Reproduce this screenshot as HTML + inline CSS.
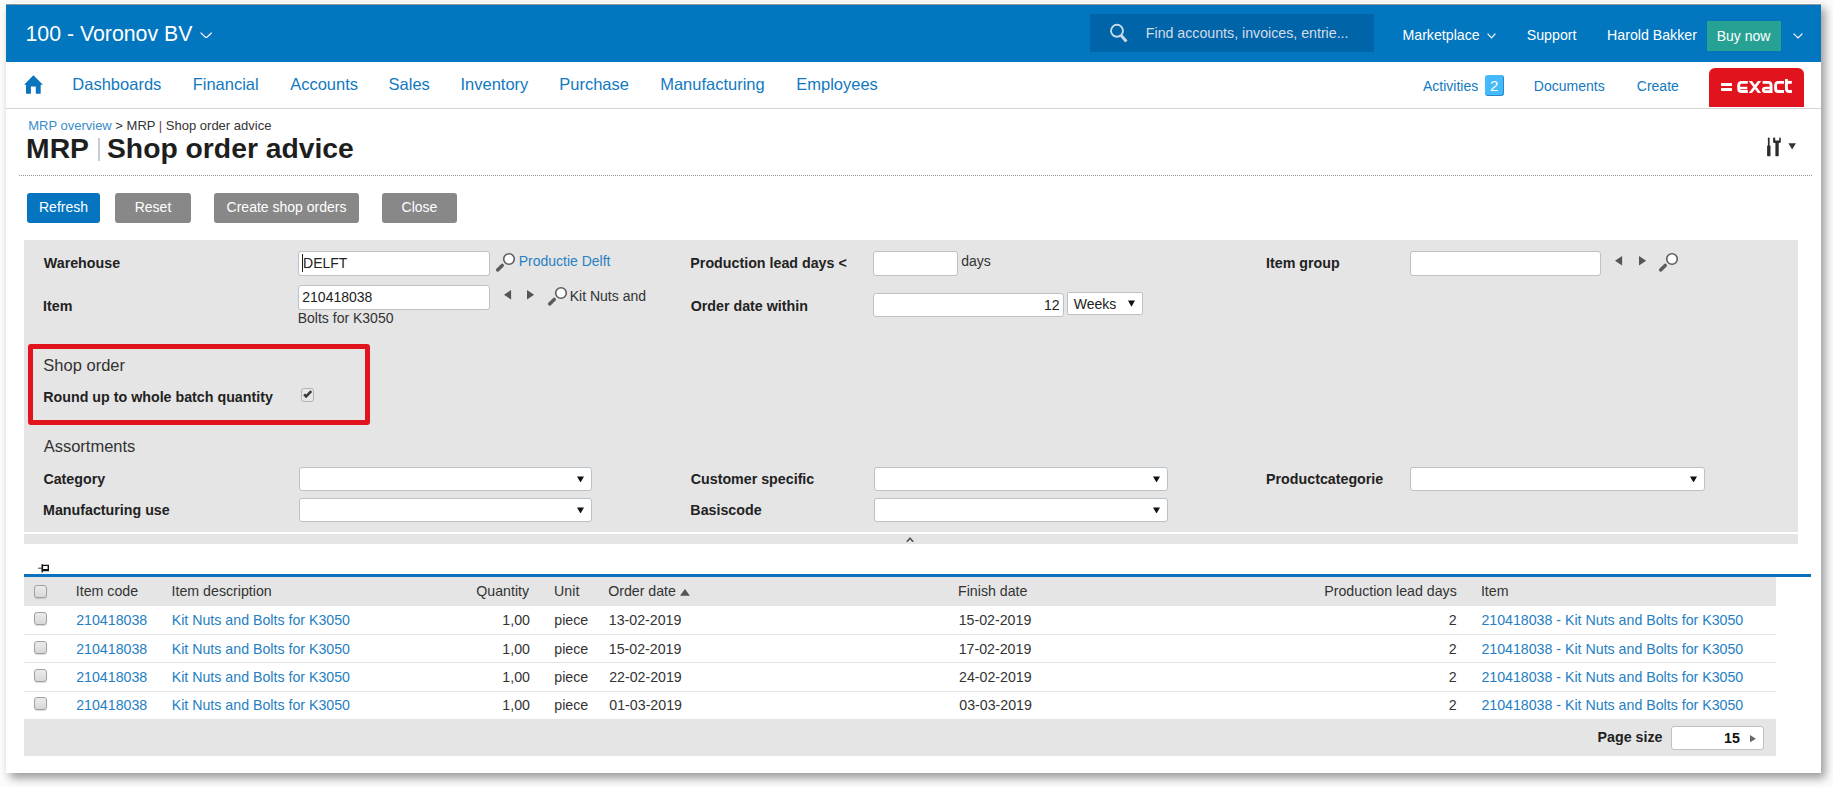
<!DOCTYPE html>
<html><head><meta charset="utf-8"><style>
html,body{margin:0;padding:0;}
body{width:1833px;height:787px;position:relative;overflow:hidden;background:#fcfcfc;font-family:"Liberation Sans",sans-serif;}
.t{position:absolute;white-space:nowrap;line-height:20px;}
.b{position:absolute;}
</style></head><body>
<div class="b" style="left:6px;top:3px;width:1815px;height:770px;background:#fff;box-shadow:4px 5px 9px rgba(0,0,0,0.4);"></div>
<div class="b" style="left:6px;top:4px;width:1815px;height:58px;background:#0276be;border-top:1px solid #8d9298;box-sizing:border-box;"></div>
<div class="t" style="left:25.48px;top:24.32px;font-size:21.3px;color:#fff;">100 - Voronov BV</div>
<svg class="b" style="left:200px;top:31.8px" width="12.3" height="6.6" viewBox="0 0 12.3 6.6"><polyline points="0.6,0.6 6.15,6.0 11.700000000000001,0.6" fill="none" stroke="#fff" stroke-width="1.2"/></svg>
<div class="b" style="left:1090px;top:14px;width:284px;height:38px;background:#0064a8;"></div>
<svg class="b" style="left:1108px;top:23px" width="20" height="21" viewBox="0 0 20 21"><circle cx="9" cy="7.8" r="6" fill="none" stroke="#c8d9ea" stroke-width="1.9"/><line x1="13.2" y1="12.4" x2="18.4" y2="18.4" stroke="#c8d9ea" stroke-width="3"/></svg>
<div class="t" style="left:1145.84px;top:23.28px;font-size:14.2px;color:#d3dde8;">Find accounts, invoices, entrie...</div>
<div class="t" style="left:1402.44px;top:25.38px;font-size:14.2px;color:#fff;">Marketplace</div>
<svg class="b" style="left:1487px;top:33.3px" width="9" height="5.5" viewBox="0 0 9 5.5"><polyline points="0.6,0.6 4.5,4.9 8.4,0.6" fill="none" stroke="#fff" stroke-width="1.2"/></svg>
<div class="t" style="left:1526.76px;top:25.38px;font-size:14.2px;color:#fff;">Support</div>
<div class="t" style="left:1607.04px;top:25.38px;font-size:14.2px;color:#fff;">Harold Bakker</div>
<div class="b" style="left:1707px;top:21px;width:74px;height:30px;background:#26a193;"></div>
<div class="t" style="left:1716.65px;top:25.85px;font-size:14px;color:#fff;">Buy now</div>
<svg class="b" style="left:1793.3px;top:33px" width="10" height="5.5" viewBox="0 0 10 5.5"><polyline points="0.6,0.6 5.0,4.9 9.4,0.6" fill="none" stroke="#fff" stroke-width="1.2"/></svg>
<div class="b" style="left:6px;top:108px;width:1815px;height:1px;background:#d4d4d4;"></div>
<svg class="b" style="left:24px;top:75px" width="19" height="19" viewBox="0 0 19 19"><path d="M9.4 0.2 L18.9 9.7 L16.7 9.7 L16.7 18.7 L11.8 18.7 L11.8 11.4 L6.9 11.4 L6.9 18.7 L2 18.7 L2 9.7 L0.1 9.7 Z" fill="#0b74bd"/></svg>
<div class="t" style="left:72.35px;top:74.18px;font-size:16.5px;color:#1279c1;">Dashboards</div>
<div class="t" style="left:192.65px;top:74.18px;font-size:16.5px;color:#1279c1;">Financial</div>
<div class="t" style="left:290.17px;top:74.18px;font-size:16.5px;color:#1279c1;">Accounts</div>
<div class="t" style="left:388.55px;top:74.18px;font-size:16.5px;color:#1279c1;">Sales</div>
<div class="t" style="left:460.48px;top:74.18px;font-size:16.5px;color:#1279c1;">Inventory</div>
<div class="t" style="left:559.25px;top:74.18px;font-size:16.5px;color:#1279c1;">Purchase</div>
<div class="t" style="left:660.15px;top:74.18px;font-size:16.5px;color:#1279c1;">Manufacturing</div>
<div class="t" style="left:796.25px;top:74.18px;font-size:16.5px;color:#1279c1;">Employees</div>
<div class="t" style="left:1422.97px;top:76.15px;font-size:14px;color:#1279c1;">Activities</div>
<div class="b" style="left:1485px;top:75px;width:19px;height:20.5px;background:#44bafa;border-right:1.2px solid #2a88c8;border-bottom:1.2px solid #2a88c8;box-sizing:border-box;border-radius:3px;"></div>
<div class="t" style="left:1294.10px;width:400px;text-align:center;top:76.10px;font-size:15px;color:#fff;">2</div>
<div class="t" style="left:1533.85px;top:76.15px;font-size:14px;color:#1279c1;">Documents</div>
<div class="t" style="left:1636.79px;top:76.15px;font-size:14px;color:#1279c1;">Create</div>
<div class="b" style="left:1709px;top:68px;width:95px;height:39px;background:#e1141d;border-radius:6px 6px 0 0;"></div>
<svg class="b" style="left:1709px;top:68px" width="95" height="39" viewBox="0 0 95 39">
<rect x="12" y="15.1" width="11" height="2.9" rx="0.6" fill="#fff"/><rect x="12" y="20.0" width="11" height="2.9" rx="0.6" fill="#fff"/>
<g fill="none" stroke="#fff" stroke-width="2.9">
<path d="M38.8 14.35 H32.6 Q29.7 14.35 29.7 17.6 V20.4 Q29.7 23.55 32.6 23.55 H38.8"/>
<path d="M29.7 20.0 H38.3" stroke-width="2.5"/>
<path d="M53.6 14.35 H59.4 Q62.05 14.35 62.05 17.2 V25"/>
<path d="M62.05 19.95 H56.6 Q54.25 19.95 54.25 21.9 Q54.25 23.6 56.2 23.6 H62.05" stroke-width="2.6"/>
<path d="M75 14.35 H69.2 Q66.6 14.35 66.6 17.6 V20.4 Q66.6 23.55 69.2 23.55 H75"/>
<path d="M77.4 11.0 V20.6 Q77.4 23.55 80.2 23.55 H82.9"/>
<path d="M77.4 14.35 H82.8"/>
</g>
<path d="M39.7 12.9 H43 L52.2 25 H48.9 Z M48.9 12.9 H52.2 L43 25 H39.7 Z" fill="#fff"/>
</svg>
<div class="t" style="left:28.2px;top:115.5px;font-size:13px;color:#333"><span style="color:#3a8ccb">MRP overview</span> &gt; MRP <span style="color:#7a3a5a">|</span> Shop order advice</div>
<div class="t" style="left:26.11px;top:138.39px;font-size:28.3px;color:#1e1e1e;font-weight:bold;">MRP</div>
<div class="b" style="left:98px;top:138px;width:2px;height:23px;background:#c8ccd4;"></div>
<div class="t" style="left:106.98px;top:138.39px;font-size:28.3px;color:#1e1e1e;font-weight:bold;">Shop order advice</div>
<svg class="b" style="left:1765px;top:136px" width="32" height="22" viewBox="0 0 32 22">
<rect x="2.9" y="1.4" width="1.7" height="9" rx="0.85" fill="#2b2b2b"/><rect x="2.1" y="9.6" width="3.4" height="10.6" rx="0.6" fill="#2b2b2b"/>
<path d="M8.1 2.4 Q8.1 1.4 9.1 1.4 L9.6 1.4 Q10.2 1.4 10.2 2.2 L10.2 4.5 L14.2 4.5 L14.2 2.2 Q14.2 1.4 14.8 1.4 L15.2 1.4 Q15.8 1.4 15.8 2.4 L15.8 5.8 Q15.8 7 14.2 7 L13.7 7 L13.7 19.6 Q13.7 20.2 13.1 20.2 L11 20.2 Q10.4 20.2 10.4 19.6 L10.4 7 L9.7 7 Q8.1 7 8.1 5.8 Z" fill="#2b2b2b"/>
<path d="M23.4 7.3 L30.9 7.3 L27.15 13.6 Z" fill="#333"/>
</svg>
<div class="b" style="left:19px;top:175px;width:1793px;height:0;border-top:1px dotted #8c9aa5;"></div>
<div class="b" style="left:27px;top:193px;width:73px;height:30px;background:#0575bf;border-radius:3px;"></div><div class="t" style="left:-136.50px;width:400px;text-align:center;top:197.05px;font-size:14px;color:#fff;">Refresh</div>
<div class="b" style="left:115px;top:193px;width:76px;height:30px;background:#888;border-radius:3px;"></div><div class="t" style="left:-47.00px;width:400px;text-align:center;top:197.05px;font-size:14px;color:#fff;">Reset</div>
<div class="b" style="left:214px;top:193px;width:145px;height:30px;background:#888;border-radius:3px;"></div><div class="t" style="left:86.50px;width:400px;text-align:center;top:197.05px;font-size:14px;color:#fff;">Create shop orders</div>
<div class="b" style="left:382px;top:193px;width:75px;height:30px;background:#888;border-radius:3px;"></div><div class="t" style="left:219.50px;width:400px;text-align:center;top:197.05px;font-size:14px;color:#fff;">Close</div>
<div class="b" style="left:24px;top:240px;width:1774px;height:292px;background:#e5e5e5;"></div>
<div class="t" style="left:43.79px;top:253.26px;font-size:14.25px;color:#222;font-weight:bold;">Warehouse</div>
<div class="b" style="left:298px;top:250.5px;width:192px;height:25.0px;background:#fff;border:1px solid #b9c2c9;border-radius:3px;box-sizing:border-box;"></div>
<div class="t" style="left:303.05px;top:253.45px;font-size:14px;color:#222;">DELFT</div>
<div class="b" style="left:302px;top:254px;width:1px;height:18px;background:#222;"></div>
<svg class="b" style="left:494.7px;top:252.3px" width="21" height="21" viewBox="0 0 21 21"><line x1="7.2" y1="13.4" x2="2.6" y2="17.9" stroke="#5c5c5c" stroke-width="3.5" stroke-linecap="round"/><circle cx="14" cy="7" r="5.3" fill="#fff" stroke="#5c5c5c" stroke-width="1.6"/></svg>
<div class="t" style="left:518.65px;top:251.05px;font-size:14px;color:#2a80c3;">Productie Delft</div>
<div class="t" style="left:43.05px;top:295.96px;font-size:14.25px;color:#222;font-weight:bold;">Item</div>
<div class="b" style="left:298px;top:284.5px;width:192px;height:25.0px;background:#fff;border:1px solid #b9c2c9;border-radius:3px;box-sizing:border-box;"></div>
<div class="t" style="left:302.30px;top:287.45px;font-size:14px;color:#222;">210418038</div>
<svg class="b" style="left:503.9px;top:290px" width="8" height="10" viewBox="0 0 8 10"><path d="M7.1 0 L0 4.8 L7.1 9.6 Z" fill="#555"/></svg>
<svg class="b" style="left:527.1px;top:290px" width="8" height="10" viewBox="0 0 8 10"><path d="M0 0 L7.1 4.8 L0 9.6 Z" fill="#555"/></svg>
<svg class="b" style="left:546.7px;top:286.4px" width="21" height="21" viewBox="0 0 21 21"><line x1="7.2" y1="13.4" x2="2.6" y2="17.9" stroke="#5c5c5c" stroke-width="3.5" stroke-linecap="round"/><circle cx="14" cy="7" r="5.3" fill="#fff" stroke="#5c5c5c" stroke-width="1.6"/></svg>
<div class="t" style="left:569.75px;top:285.65px;font-size:14px;color:#333;">Kit Nuts and</div>
<div class="t" style="left:297.75px;top:308.15px;font-size:14px;color:#333;">Bolts for K3050</div>
<div class="t" style="left:690.35px;top:253.26px;font-size:14.25px;color:#222;font-weight:bold;">Production lead days &lt;</div>
<div class="b" style="left:873.4px;top:250.5px;width:84.60000000000002px;height:25.0px;background:#fff;border:1px solid #b9c2c9;border-radius:3px;box-sizing:border-box;"></div>
<div class="t" style="left:961.31px;top:251.15px;font-size:14px;color:#333;">days</div>
<div class="t" style="left:690.72px;top:296.06px;font-size:14.25px;color:#222;font-weight:bold;">Order date within</div>
<div class="b" style="left:873.4px;top:292.7px;width:190.39999999999998px;height:24.600000000000023px;background:#fff;border:1px solid #b9c2c9;border-radius:3px;box-sizing:border-box;"></div>
<div class="t" style="right:773.50px;top:295.05px;font-size:14px;color:#222;">12</div>
<div class="b" style="left:1067.3px;top:292.3px;width:75.70000000000005px;height:23.099999999999966px;background:#fff;border:1px solid #b9c2c9;border-radius:3px;box-sizing:border-box;border-radius:2px;"></div>
<div class="t" style="left:1073.84px;top:294.15px;font-size:14px;color:#222;">Weeks</div>
<svg class="b" style="left:1127.9px;top:300px" width="7" height="6.7" viewBox="0 0 7 6.7"><path d="M0 0.5 L7 0.5 L3.5 6.7 Z" fill="#111"/></svg>
<div class="t" style="left:1266.05px;top:253.26px;font-size:14.25px;color:#222;font-weight:bold;">Item group</div>
<div class="b" style="left:1410.4px;top:250.5px;width:190.5999999999999px;height:25.0px;background:#fff;border:1px solid #b9c2c9;border-radius:3px;box-sizing:border-box;"></div>
<svg class="b" style="left:1615.4px;top:255.9px" width="8" height="10" viewBox="0 0 8 10"><path d="M7.1 0 L0 4.8 L7.1 9.6 Z" fill="#555"/></svg>
<svg class="b" style="left:1638.7px;top:255.9px" width="8" height="10" viewBox="0 0 8 10"><path d="M0 0 L7.1 4.8 L0 9.6 Z" fill="#555"/></svg>
<svg class="b" style="left:1658px;top:252.2px" width="21" height="21" viewBox="0 0 21 21"><line x1="7.2" y1="13.4" x2="2.6" y2="17.9" stroke="#5c5c5c" stroke-width="3.5" stroke-linecap="round"/><circle cx="14" cy="7" r="5.3" fill="#fff" stroke="#5c5c5c" stroke-width="1.6"/></svg>
<div class="b" style="left:28px;top:344px;width:342px;height:81px;border:5px solid #e1141e;box-sizing:border-box;border-radius:3px;"></div>
<div class="t" style="left:43.35px;top:354.88px;font-size:16.5px;color:#333;">Shop order</div>
<div class="t" style="left:43.30px;top:386.86px;font-size:14.25px;color:#222;font-weight:bold;">Round up to whole batch quantity</div>
<div class="b" style="left:301px;top:388px;width:13px;height:13.5px;background:#e8e8e8;border:1px solid #b3b3b3;border-radius:3px;box-sizing:border-box;"></div>
<svg class="b" style="left:301px;top:388px" width="13" height="13" viewBox="0 0 13 13"><polyline points="3.1,6.3 5.1,8.4 10.3,3.1" fill="none" stroke="#3a3a3a" stroke-width="2.5"/></svg>
<div class="t" style="left:43.67px;top:436.28px;font-size:16.5px;color:#333;">Assortments</div>
<div class="t" style="left:43.42px;top:469.16px;font-size:14.25px;color:#222;font-weight:bold;">Category</div>
<div class="b" style="left:299px;top:467px;width:293px;height:24px;background:#fff;border:1px solid #b9c2c9;border-radius:3px;box-sizing:border-box;"></div>
<svg class="b" style="left:577px;top:475.5px" width="7" height="6.5" viewBox="0 0 7 6.5"><path d="M0 0.5 L7 0.5 L3.5 6.5 Z" fill="#111"/></svg>
<div class="t" style="left:690.72px;top:469.16px;font-size:14.25px;color:#222;font-weight:bold;">Customer specific</div>
<div class="b" style="left:873.5px;top:467px;width:294.0px;height:24px;background:#fff;border:1px solid #b9c2c9;border-radius:3px;box-sizing:border-box;"></div>
<svg class="b" style="left:1152.5px;top:475.5px" width="7" height="6.5" viewBox="0 0 7 6.5"><path d="M0 0.5 L7 0.5 L3.5 6.5 Z" fill="#111"/></svg>
<div class="t" style="left:1266.05px;top:469.16px;font-size:14.25px;color:#222;font-weight:bold;">Productcategorie</div>
<div class="b" style="left:1410.4px;top:467px;width:294.5999999999999px;height:24px;background:#fff;border:1px solid #b9c2c9;border-radius:3px;box-sizing:border-box;"></div>
<svg class="b" style="left:1690px;top:475.5px" width="7" height="6.5" viewBox="0 0 7 6.5"><path d="M0 0.5 L7 0.5 L3.5 6.5 Z" fill="#111"/></svg>
<div class="t" style="left:43.05px;top:500.36px;font-size:14.25px;color:#222;font-weight:bold;">Manufacturing use</div>
<div class="b" style="left:299px;top:498px;width:293px;height:23.5px;background:#fff;border:1px solid #b9c2c9;border-radius:3px;box-sizing:border-box;"></div>
<svg class="b" style="left:577px;top:506.5px" width="7" height="6.5" viewBox="0 0 7 6.5"><path d="M0 0.5 L7 0.5 L3.5 6.5 Z" fill="#111"/></svg>
<div class="t" style="left:690.35px;top:500.36px;font-size:14.25px;color:#222;font-weight:bold;">Basiscode</div>
<div class="b" style="left:873.5px;top:498px;width:294.0px;height:23.5px;background:#fff;border:1px solid #b9c2c9;border-radius:3px;box-sizing:border-box;"></div>
<svg class="b" style="left:1152.5px;top:506.5px" width="7" height="6.5" viewBox="0 0 7 6.5"><path d="M0 0.5 L7 0.5 L3.5 6.5 Z" fill="#111"/></svg>
<div class="b" style="left:24px;top:534px;width:1774px;height:10px;background:#e5e5e5;"></div>
<svg class="b" style="left:905px;top:536px" width="10" height="7" viewBox="0 0 10 7"><path d="M1 5.6 L5 1 L9 5.6 L7.3 6 L5 3.4 L2.7 6 Z" fill="#555"/></svg>
<svg class="b" style="left:37px;top:564px" width="13" height="9" viewBox="0 0 13 9"><rect x="1" y="3.7" width="4" height="1" fill="#444"/><path d="M5.3 0.8 H12 V7.3 H5.3 Z M6.1 2.1 V4.9 H10.6 V2.1 Z" fill="#111" fill-rule="evenodd"/><rect x="4.5" y="0.2" width="1.4" height="8.3" fill="#111"/></svg>
<div class="b" style="left:24px;top:574px;width:1787px;height:3px;background:#0a72ba;"></div>
<div class="b" style="left:24px;top:577px;width:1752px;height:29px;background:#e5e5e5;"></div>
<div class="b" style="left:33.5px;top:584.5px;width:13.0px;height:13.0px;background:linear-gradient(#ebebeb,#d8d8d8);border:1px solid #a0a0a0;border-radius:3px;box-sizing:border-box;box-shadow:0 1px 1px rgba(0,0,0,0.15);"></div>
<div class="t" style="left:75.79px;top:581.08px;font-size:14.2px;color:#333;">Item code</div>
<div class="t" style="left:171.59px;top:581.08px;font-size:14.2px;color:#333;">Item description</div>
<div class="t" style="right:1303.87px;top:581.08px;font-size:14.2px;color:#333;">Quantity</div>
<div class="t" style="left:554.10px;top:581.08px;font-size:14.2px;color:#333;">Unit</div>
<div class="t" style="left:608.13px;top:581.08px;font-size:14.2px;color:#333;">Order date</div>
<svg class="b" style="left:679.7px;top:589.2px" width="10" height="7" viewBox="0 0 10 7"><path d="M0 6.7 L9.9 6.7 L4.95 0 Z" fill="#555"/></svg>
<div class="t" style="left:958.04px;top:581.08px;font-size:14.2px;color:#333;">Finish date</div>
<div class="t" style="right:376.19px;top:581.08px;font-size:14.2px;color:#333;">Production lead days</div>
<div class="t" style="left:1480.89px;top:581.08px;font-size:14.2px;color:#333;">Item</div>
<div class="b" style="left:33.5px;top:612.2px;width:13.0px;height:13.0px;background:linear-gradient(#ebebeb,#d8d8d8);border:1px solid #a0a0a0;border-radius:3px;box-sizing:border-box;box-shadow:0 1px 1px rgba(0,0,0,0.15);"></div>
<div class="t" style="left:76.19px;top:610.18px;font-size:14.2px;color:#2580c3;">210418038</div>
<div class="t" style="left:171.74px;top:610.18px;font-size:14.2px;color:#2580c3;">Kit Nuts and Bolts for K3050</div>
<div class="t" style="right:1303.05px;top:610.18px;font-size:14.2px;color:#333;">1,00</div>
<div class="t" style="left:554.28px;top:610.18px;font-size:14.2px;color:#333;">piece</div>
<div class="t" style="left:608.82px;top:610.18px;font-size:14.2px;color:#333;">13-02-2019</div>
<div class="t" style="left:958.72px;top:610.18px;font-size:14.2px;color:#333;">15-02-2019</div>
<div class="t" style="right:376.29px;top:610.18px;font-size:14.2px;color:#333;">2</div>
<div class="t" style="left:1481.39px;top:610.18px;font-size:14.2px;color:#2580c3;">210418038 - Kit Nuts and Bolts for K3050</div>
<div class="b" style="left:33.5px;top:640.5px;width:13.0px;height:13.0px;background:linear-gradient(#ebebeb,#d8d8d8);border:1px solid #a0a0a0;border-radius:3px;box-sizing:border-box;box-shadow:0 1px 1px rgba(0,0,0,0.15);"></div>
<div class="t" style="left:76.19px;top:638.58px;font-size:14.2px;color:#2580c3;">210418038</div>
<div class="t" style="left:171.74px;top:638.58px;font-size:14.2px;color:#2580c3;">Kit Nuts and Bolts for K3050</div>
<div class="t" style="right:1303.05px;top:638.58px;font-size:14.2px;color:#333;">1,00</div>
<div class="t" style="left:554.28px;top:638.58px;font-size:14.2px;color:#333;">piece</div>
<div class="t" style="left:608.82px;top:638.58px;font-size:14.2px;color:#333;">15-02-2019</div>
<div class="t" style="left:958.72px;top:638.58px;font-size:14.2px;color:#333;">17-02-2019</div>
<div class="t" style="right:376.29px;top:638.58px;font-size:14.2px;color:#333;">2</div>
<div class="t" style="left:1481.39px;top:638.58px;font-size:14.2px;color:#2580c3;">210418038 - Kit Nuts and Bolts for K3050</div>
<div class="b" style="left:33.5px;top:668.8000000000001px;width:13.0px;height:13.0px;background:linear-gradient(#ebebeb,#d8d8d8);border:1px solid #a0a0a0;border-radius:3px;box-sizing:border-box;box-shadow:0 1px 1px rgba(0,0,0,0.15);"></div>
<div class="t" style="left:76.19px;top:666.88px;font-size:14.2px;color:#2580c3;">210418038</div>
<div class="t" style="left:171.74px;top:666.88px;font-size:14.2px;color:#2580c3;">Kit Nuts and Bolts for K3050</div>
<div class="t" style="right:1303.05px;top:666.88px;font-size:14.2px;color:#333;">1,00</div>
<div class="t" style="left:554.28px;top:666.88px;font-size:14.2px;color:#333;">piece</div>
<div class="t" style="left:609.19px;top:666.88px;font-size:14.2px;color:#333;">22-02-2019</div>
<div class="t" style="left:959.09px;top:666.88px;font-size:14.2px;color:#333;">24-02-2019</div>
<div class="t" style="right:376.29px;top:666.88px;font-size:14.2px;color:#333;">2</div>
<div class="t" style="left:1481.39px;top:666.88px;font-size:14.2px;color:#2580c3;">210418038 - Kit Nuts and Bolts for K3050</div>
<div class="b" style="left:33.5px;top:697.1px;width:13.0px;height:13.0px;background:linear-gradient(#ebebeb,#d8d8d8);border:1px solid #a0a0a0;border-radius:3px;box-sizing:border-box;box-shadow:0 1px 1px rgba(0,0,0,0.15);"></div>
<div class="t" style="left:76.19px;top:695.18px;font-size:14.2px;color:#2580c3;">210418038</div>
<div class="t" style="left:171.74px;top:695.18px;font-size:14.2px;color:#2580c3;">Kit Nuts and Bolts for K3050</div>
<div class="t" style="right:1303.05px;top:695.18px;font-size:14.2px;color:#333;">1,00</div>
<div class="t" style="left:554.28px;top:695.18px;font-size:14.2px;color:#333;">piece</div>
<div class="t" style="left:609.35px;top:695.18px;font-size:14.2px;color:#333;">01-03-2019</div>
<div class="t" style="left:959.25px;top:695.18px;font-size:14.2px;color:#333;">03-03-2019</div>
<div class="t" style="right:376.29px;top:695.18px;font-size:14.2px;color:#333;">2</div>
<div class="t" style="left:1481.39px;top:695.18px;font-size:14.2px;color:#2580c3;">210418038 - Kit Nuts and Bolts for K3050</div>
<div class="b" style="left:24px;top:634px;width:1752px;height:1px;background:#e3e3e3;"></div>
<div class="b" style="left:24px;top:662px;width:1752px;height:1px;background:#e3e3e3;"></div>
<div class="b" style="left:24px;top:691px;width:1752px;height:1px;background:#e3e3e3;"></div>
<div class="b" style="left:24px;top:719px;width:1752px;height:37px;background:#e5e5e5;"></div>
<div class="t" style="right:170.51px;top:727.06px;font-size:14.25px;color:#222;font-weight:bold;">Page size</div>
<div class="b" style="left:1671.3px;top:726px;width:92.70000000000005px;height:23.600000000000023px;background:#fff;border:1px solid #b9c2c9;border-radius:3px;box-sizing:border-box;"></div>
<div class="t" style="right:93.10px;top:728.06px;font-size:14.25px;color:#111;font-weight:bold;">15</div>
<svg class="b" style="left:1750.4px;top:734.5px" width="7" height="8" viewBox="0 0 7 8"><path d="M0 0 L5.9 3.65 L0 7.3 Z" fill="#666"/></svg>
</body></html>
